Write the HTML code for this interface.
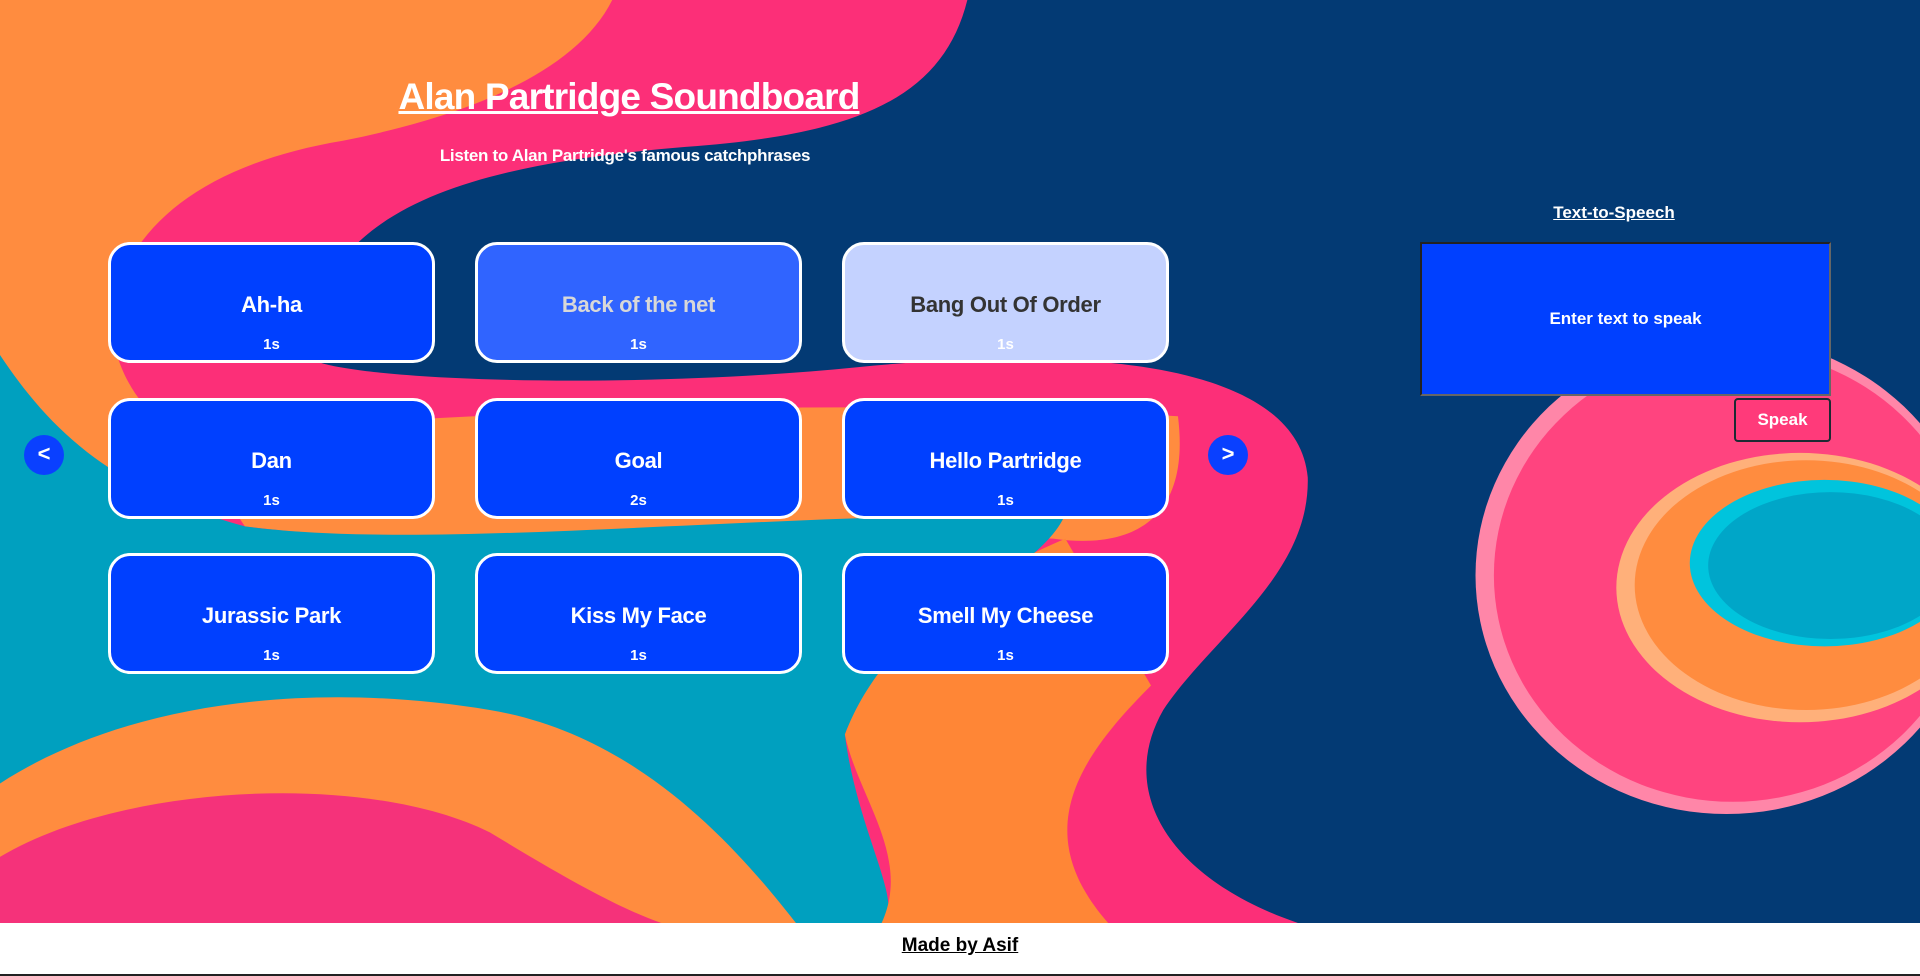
<!DOCTYPE html>
<html><head><meta charset="utf-8"><style>
*{margin:0;padding:0;box-sizing:border-box}
html,body{width:1920px;height:976px;overflow:hidden;background:#fff;font-family:"Liberation Sans Narrow","Liberation Sans",sans-serif}
#bg{position:absolute;left:0;top:0;width:1920px;height:923px}
.t{position:absolute;color:#fff;font-weight:bold;white-space:nowrap;text-align:center}
h1{position:absolute;left:393px;top:76px;width:472px;text-align:center;color:#fff;font-size:37px;text-decoration:underline;text-decoration-thickness:3px;letter-spacing:-0.8px;white-space:nowrap}
.b{position:absolute;width:327px;height:121px;border:3px solid #fff;border-radius:22px;background:#0040ff;color:#fff;text-align:center}
.b .n{position:absolute;left:0;right:0;top:47px;font-size:22px;font-weight:bold;letter-spacing:-0.3px}
.b .d{position:absolute;left:0;right:0;top:91px;font-size:15px;font-weight:bold}
.arr{position:absolute;width:40px;height:40px;border-radius:50%;background:#0a40ff;color:#fff;font-weight:bold;font-size:22px;text-align:center;line-height:38px}
</style></head><body>
<svg id="bg" viewBox="0 0 1568 754" preserveAspectRatio="none">
<rect width="1568" height="754" fill="#033a74"/>
<path d="M0,0 L790,0 C770,80 700,110 560,120 C380,135 260,170 250,290 C260,310 500,320 700,300 C900,280 1060,300 1068,390 C1070,470 990,520 950,580 C910,650 960,720 1060,754 L0,754 Z" fill="#fc2f78"/>
<path d="M0,0 L500,0 C470,60 380,95 280,115 C160,135 100,190 90,260 C95,320 130,350 170,370 L0,400 Z" fill="#ff8c3f"/>
<path d="M150,355 C400,335 700,325 962,340 C972,420 930,450 860,440 C600,430 350,450 200,430 Z" fill="#ff8c3f"/>
<path d="M0,290 C40,350 90,400 200,430 C350,450 600,420 870,420 C850,470 720,520 690,600 C700,680 740,740 720,754 L0,754 Z" fill="#00a0bf"/>
<path d="M690,600 C720,520 800,470 870,440 L940,560 C880,620 840,680 905,754 L720,754 C745,700 700,650 690,600 Z" fill="#ff8636"/>
<path d="M0,640 C100,575 250,555 400,580 C520,600 600,690 650,754 L0,754 Z" fill="#ff8c3f"/>
<path d="M0,754 L0,700 C100,640 300,630 400,680 C450,710 500,740 540,754 Z" fill="#f5327a"/>
<ellipse cx="1410" cy="470" rx="205" ry="195" fill="#ff86a8"/>
<ellipse cx="1415" cy="470" rx="195" ry="185" fill="#ff447f"/>
<ellipse cx="1470" cy="480" rx="150" ry="110" fill="#ffb07a"/>
<ellipse cx="1475" cy="478" rx="140" ry="102" fill="#ff8c3f"/>
<ellipse cx="1490" cy="460" rx="110" ry="68" fill="#00c4dd"/>
<ellipse cx="1495" cy="462" rx="100" ry="60" fill="#00a6c8"/>
</svg>
<h1>Alan Partridge Soundboard</h1>
<div class="t" style="left:425px;top:146px;width:400px;font-size:17px;letter-spacing:-0.3px">Listen to Alan Partridge's famous catchphrases</div>

<div class="b" style="left:108px;top:242px"><div class="n">Ah-ha</div><div class="d">1s</div></div>
<div class="b" style="left:475px;top:242px;background:#3064ff"><div class="n" style="color:#d8d8d8">Back of the net</div><div class="d">1s</div></div>
<div class="b" style="left:842px;top:242px;background:#c4d2ff"><div class="n" style="color:#333">Bang Out Of Order</div><div class="d">1s</div></div>
<div class="b" style="left:108px;top:398px"><div class="n">Dan</div><div class="d">1s</div></div>
<div class="b" style="left:475px;top:398px"><div class="n">Goal</div><div class="d">2s</div></div>
<div class="b" style="left:842px;top:398px"><div class="n">Hello Partridge</div><div class="d">1s</div></div>
<div class="b" style="left:108px;top:553px"><div class="n">Jurassic Park</div><div class="d">1s</div></div>
<div class="b" style="left:475px;top:553px"><div class="n">Kiss My Face</div><div class="d">1s</div></div>
<div class="b" style="left:842px;top:553px"><div class="n">Smell My Cheese</div><div class="d">1s</div></div>

<div class="arr" style="left:24px;top:435px">&lt;</div>
<div class="arr" style="left:1208px;top:435px">&gt;</div>

<div class="t" style="left:1514px;top:203px;width:200px;font-size:17px;text-decoration:underline">Text-to-Speech</div>
<div style="position:absolute;left:1420px;top:242px;width:411px;height:154px;background:#0040ff;border:2px solid #222;border-right-color:#666;border-bottom-color:#666;color:#fff;font-weight:bold;font-size:17px;text-align:center;line-height:150px">Enter text to speak</div>
<div style="position:absolute;left:1734px;top:398px;width:97px;height:44px;background:#ff3a7a;border:2px solid #1d2a33;border-radius:4px;color:#fff;font-weight:bold;font-size:17px;text-align:center;line-height:40px">Speak</div>

<div style="position:absolute;left:0;top:923px;width:1920px;height:53px;background:#fff"></div>
<div class="t" style="left:860px;top:935px;width:200px;font-size:19px;color:#000;text-decoration:underline">Made by Asif</div>
<div style="position:absolute;left:0;top:974px;width:1920px;height:2px;background:#222"></div>
</body></html>
